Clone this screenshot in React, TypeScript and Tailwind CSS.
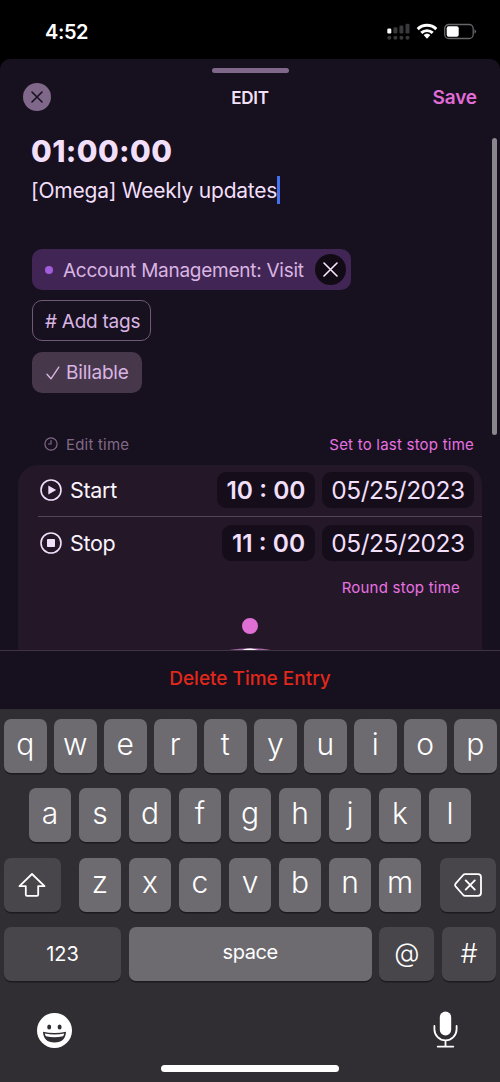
import type { ReactNode } from 'react'

const topRow = ['q', 'w', 'e', 'r', 't', 'y', 'u', 'i', 'o', 'p']
const homeRow = ['a', 's', 'd', 'f', 'g', 'h', 'j', 'k', 'l']
const bottomRow = ['z', 'x', 'c', 'v', 'b', 'n', 'm']

export default function App() {
  return (
    <div className="flex h-[1082px] w-[500px] flex-col overflow-hidden bg-black font-['Inter','Liberation_Sans',sans-serif]">
      <StatusBar />
      <main className="relative flex h-[591px] shrink-0 flex-col overflow-hidden rounded-t-[10px] bg-[#17101e]">
        <SheetHeader />
        <Entry />
        <TimeEditor />
        <div className="absolute top-[79px] right-[3px] h-[297px] w-[5px] rounded-full bg-[#8a868d]" />
      </main>
      <footer className="flex h-[59px] shrink-0 items-center justify-center border-t border-[#3f3344] bg-[#17101e] pb-px text-[19px] font-medium text-[#e0281b]">
        Delete Time Entry
      </footer>
      <Keyboard />
    </div>
  )
}

function StatusBar() {
  return (
    <div className="flex h-[59px] shrink-0 items-start justify-between pr-[23px] pl-[45px]">
      <span className="mt-[20px] text-[20px] leading-6 font-semibold tracking-[-0.4px] text-white">
        4:52
      </span>
      <div className="mt-[23px] flex items-start">
        <svg width="23" height="18" viewBox="0 0 23 18" fill="#39383b">
          <rect x="0.3" y="5.5" width="4" height="5" rx="1.3" fill="#fff" />
          <rect x="6.4" y="4.2" width="4" height="6.3" rx="1.3" />
          <rect x="12.4" y="2.6" width="4" height="7.9" rx="1.3" />
          <rect x="18.5" y="0.7" width="4" height="9.8" rx="1.3" />
          <circle cx="2.3" cy="14.8" r="2" />
          <circle cx="8.4" cy="14.8" r="2" />
          <circle cx="14.4" cy="14.8" r="2" />
          <circle cx="20.5" cy="14.8" r="2" />
        </svg>
        <svg className="ml-[6px]" width="22" height="18" viewBox="0 0 22 18">
          <g fill="none" stroke="#fff" strokeWidth="2.9">
            <path d="M1.7 6.1 A13.3 13.3 0 0 1 20.3 6.1" />
            <path d="M5.3 9.9 A8.2 8.2 0 0 1 16.7 9.9" />
          </g>
          <path
            d="M7.6 12.1 A5 5 0 0 1 14.4 12.1 L11.5 15.2 Q11 15.7 10.5 15.2 Z"
            fill="#fff"
          />
        </svg>
        <svg className="ml-[6px]" width="33" height="17" viewBox="0 0 33 17">
          <rect
            x="0.7"
            y="1.5"
            width="28.5"
            height="14"
            rx="4"
            fill="none"
            stroke="#66656a"
            strokeWidth="1.3"
          />
          <rect x="2.7" y="3.3" width="12" height="10.4" rx="2" fill="#fff" />
          <path d="M30.5 6.2 q1.6 .7 1.6 2.3 t-1.6 2.3z" fill="#66656a" />
        </svg>
      </div>
    </div>
  )
}

function SheetHeader() {
  return (
    <header className="flex shrink-0 flex-col">
      <div className="mx-auto mt-[9px] h-[5px] w-[77px] rounded-full bg-[#7f6889]" />
      <div className="mt-[10px] grid h-7 grid-cols-3 items-center px-[23px]">
        <button className="flex size-7 items-center justify-center rounded-full bg-[#7f6889]">
          <svg width="12" height="12" viewBox="0 0 12 12">
            <path
              d="M1 1 L11 11 M11 1 L1 11"
              stroke="#17101e"
              strokeWidth="1.6"
              strokeLinecap="round"
            />
          </svg>
        </button>
        <h1 className="pt-0.5 text-center text-[17px] leading-5 font-semibold tracking-[-0.2px] text-[#f3e0fb]">
          EDIT
        </h1>
        <button className="pt-0.5 text-right text-[19px] leading-5 font-semibold tracking-[-0.1px] text-[#e06cd6]">
          Save
        </button>
      </div>
    </header>
  )
}

function Entry() {
  return (
    <section className="mt-[22px] flex shrink-0 flex-col items-start pl-8">
      <div className="-ml-px h-9 text-[30px] leading-9 font-extrabold tracking-[0.4px] whitespace-nowrap text-[#f2dffa]">
        01:00:00
      </div>
      <div className="mt-[7px] -ml-px flex h-7 items-center">
        <span className="pt-0.5 text-[21px] leading-7 tracking-[-0.22px] whitespace-nowrap text-[#f2dffa]">
          [Omega] Weekly updates
        </span>
        <span className="h-7 w-[3px] bg-[#4270f0]" />
      </div>
      <div className="mt-[45px] flex flex-col items-start gap-[10.4px] text-[19px] tracking-[-0.26px] text-[#d9b5e3]">
        <div className="flex h-[41px] w-[319px] items-center rounded-[10px] bg-[#412554] pr-[5px] pl-[13px]">
          <span className="size-2 rounded-full bg-[#a25ddc]" />
          <span className="ml-[10px] pt-[3px] whitespace-nowrap">
            Account Management: Visit
          </span>
          <button className="ml-auto flex size-[31px] items-center justify-center rounded-full bg-[#120b16]">
            <svg width="15" height="15" viewBox="0 0 15 15">
              <path
                d="M1 1 L14 14 M14 1 L1 14"
                stroke="#f7e8fc"
                strokeWidth="1.6"
                strokeLinecap="round"
              />
            </svg>
          </button>
        </div>
        <button className="flex h-[41px] w-[119px] items-center rounded-[10px] border border-[#6f5a78] pt-0.5 pl-3 whitespace-nowrap">
          # Add tags
        </button>
        <button className="flex h-[41px] w-[110px] items-center rounded-[10px] bg-[#47374b] pt-0.5 pl-[14px]">
          <svg width="14" height="14" viewBox="0 0 14 14">
            <path
              d="M1 8.2 L5 12.8 L12.8 1.2"
              fill="none"
              stroke="#d9b5e3"
              strokeWidth="1.4"
              strokeLinecap="round"
              strokeLinejoin="round"
            />
          </svg>
          <span className="ml-[6px] tracking-[-0.2px]">Billable</span>
        </button>
      </div>
    </section>
  )
}

function TimeEditor() {
  return (
    <section className="mt-[41px] flex min-h-0 flex-1 flex-col overflow-hidden">
      <div className="flex h-5 shrink-0 items-center pr-[26px] pl-11 text-[15px] tracking-[0.2px] text-[#816988]">
        <svg width="14" height="14" viewBox="0 0 14 14" fill="none" stroke="#816988">
          <circle cx="7" cy="7" r="6.1" strokeWidth="1.2" />
          <path d="M7 3.2 V7 H4" strokeWidth="1.2" />
        </svg>
        <span className="ml-[8px] pt-0.5">Edit time</span>
        <button className="ml-auto pt-0.5 tracking-[0.22px] text-[#e872e2]">
          Set to last stop time
        </button>
      </div>
      <div className="mx-[18px] mt-[11px] flex flex-1 flex-col rounded-t-[20px] bg-[#241828]">
        <TimeRow label="Start" time="10 : 00" wide>
          <path d="M8.3 6.5 L16.2 11 L8.3 15.5Z" fill="#f2dffa" />
        </TimeRow>
        <div className="ml-5 h-px shrink-0 bg-[#54445a]" />
        <TimeRow label="Stop" time="11 : 00">
          <rect x="7" y="7" width="8" height="8" rx="0.8" fill="#f2dffa" />
        </TimeRow>
        <button className="mt-[8.5px] mr-[22px] h-5 shrink-0 self-end text-[15px] leading-5 tracking-[0.22px] text-[#e872e2]">
          Round stop time
        </button>
        <div className="mx-auto mt-[19.5px] size-4 shrink-0 rounded-full bg-[#df6fd4]" />
        {/* Tip of the clock dial, the rest sits below the fold */}
        <svg className="mx-auto mt-[14px] shrink-0" width="42" height="2" viewBox="0 0 42 2">
          <path d="M0 2 Q21 -1.5 42 2Z" fill="#a766a8" />
          <path d="M13 2 Q21 -.8 29 2Z" fill="#fff" />
        </svg>
      </div>
    </section>
  )
}

function TimeRow({
  label,
  time,
  wide,
  children,
}: {
  label: string
  time: string
  wide?: boolean
  children: ReactNode
}) {
  return (
    <div
      className={
        'flex shrink-0 items-center pr-2 pl-[22px] text-[24.5px] text-[#f2dffa]' +
        ' ' +
        (wide ? 'h-[51px]' : 'h-[53px]')
      }
    >
      <svg width="22" height="22" viewBox="0 0 22 22">
        <circle cx="11" cy="11" r="10" fill="none" stroke="#f2dffa" strokeWidth="1.6" />
        {children}
      </svg>
      <span className="ml-2 text-[21.5px] tracking-[-0.3px] text-[#fbf3fd]">
        {label}
      </span>
      <div
        className={
          'ml-auto flex h-9 items-center justify-center rounded-[9px] bg-[#150e1a] pt-px font-semibold whitespace-nowrap' +
          ' ' +
          (wide ? 'w-[98px]' : 'w-[93px]')
        }
      >
        {time}
      </div>
      <div className="ml-[7px] flex h-9 w-[152px] items-center justify-center rounded-[9px] bg-[#150e1a] pt-px tracking-[-0.5px]">
        05/25/2023
      </div>
    </div>
  )
}

function Key({
  className = 'w-[42.5px] bg-[#6d6b70]',
  children,
}: {
  className?: string
  children: ReactNode
}) {
  return (
    <button
      className={
        'flex h-[54px] shrink-0 items-center justify-center rounded-[7px] text-white shadow-[0_1.5px_0_#1d1b1f]' +
        ' ' +
        className
      }
    >
      {children}
    </button>
  )
}

function Letters({ letters }: { letters: string[] }) {
  return (
    <div className="flex gap-[7.5px]">
      {letters.map((letter) => (
        <Key key={letter}>
          <span className="pb-[5px] text-[30px] leading-9 font-[350]">{letter}</span>
        </Key>
      ))}
    </div>
  )
}

function Keyboard() {
  return (
    <div className="flex flex-1 flex-col gap-[15.3px] bg-[#302d33] px-1 pt-[10px]">
      <Letters letters={topRow} />
      <div className="flex justify-center">
        <Letters letters={homeRow} />
      </div>
      <div className="flex justify-between">
        <Key className="w-[56.5px] bg-[#48464b]">
          <svg width="28" height="24" viewBox="0 0 28 24">
            <path
              d="M14 1 L26.5 13.2 H20.2 V21.5 Q20.2 22.8 19 22.8 H9 Q7.8 22.8 7.8 21.5 V13.2 H1.5 Z"
              fill="none"
              stroke="#fff"
              strokeWidth="1.8"
              strokeLinejoin="round"
            />
          </svg>
        </Key>
        <Letters letters={bottomRow} />
        <Key className="w-[56.5px] bg-[#48464b]">
          <svg width="28" height="24" viewBox="0 0 28 24" fill="none" stroke="#fff">
            <path
              d="M11 1.2 H24 Q27 1.2 27 4.2 V19.8 Q27 22.8 24 22.8 H11 Q10 22.8 9.2 22 L1.6 13.3 Q.6 12 1.6 10.7 L9.2 2 Q10 1.2 11 1.2Z"
              strokeWidth="1.8"
              strokeLinejoin="round"
            />
            <path
              d="M11.7 7.4 L20.8 16.6 M20.8 7.4 L11.7 16.6"
              strokeWidth="1.9"
              strokeLinecap="round"
            />
          </svg>
        </Key>
      </div>
      <div className="flex justify-between">
        <Key className="w-[117px] bg-[#48464b] text-[20px]">123</Key>
        <Key className="w-[243px] bg-[#6d6b70] pb-[3px] text-[20px] tracking-[-0.4px]">
          space
        </Key>
        <Key className="w-[55px] bg-[#48464b] pb-0.5 text-[26px] font-[350]">@</Key>
        <Key className="w-[54px] bg-[#48464b] text-[27px] font-[350]">#</Key>
      </div>
      <div className="mt-4 flex items-center justify-between pr-[38px] pl-[33px]">
        <svg width="35" height="35" viewBox="0 0 35 35">
          <circle cx="17.5" cy="17.5" r="17.5" fill="#fff" />
          <ellipse cx="12.2" cy="14" rx="2" ry="2.5" fill="#302d33" />
          <ellipse cx="22.6" cy="14" rx="2" ry="2.5" fill="#302d33" />
          <path
            d="M6 18.8 Q17.5 21.2 29 18.8 Q28.6 29.5 17.5 29.5 Q6.4 29.5 6 18.8Z"
            fill="#302d33"
          />
          <path
            d="M7.8 20.4 Q17.5 22.6 27.2 20.4 Q27 22.2 26 23.2 Q17.5 25.4 9 23.2 Q8 22.2 7.8 20.4Z"
            fill="#fff"
          />
        </svg>
        <svg className="-mt-px" width="25" height="37" viewBox="0 0 25 37" fill="none" stroke="#fff">
          <rect x="6.8" y="0.5" width="11.4" height="24" rx="5.7" fill="#fff" stroke="none" />
          <path
            d="M1.4 15 V18.2 A11.1 11.1 0 0 0 23.6 18.2 V15 M12.5 29.5 V35.6 M4.7 35.6 H20.3"
            strokeWidth="1.8"
            strokeLinecap="round"
          />
        </svg>
      </div>
      <div className="mx-auto mt-0.5 h-[7px] w-[178px] rounded-full bg-white" />
    </div>
  )
}
